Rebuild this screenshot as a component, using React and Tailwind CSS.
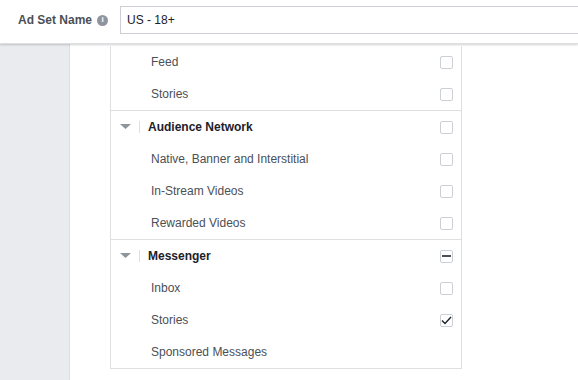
import React from "react";

const groups = [
  {
    title: null,
    items: [
      { label: "Feed", state: "off" },
      { label: "Stories", state: "off" },
    ],
  },
  {
    title: "Audience Network",
    state: "off",
    items: [
      { label: "Native, Banner and Interstitial", state: "off" },
      { label: "In-Stream Videos", state: "off" },
      { label: "Rewarded Videos", state: "off" },
    ],
  },
  {
    title: "Messenger",
    state: "mixed",
    items: [
      { label: "Inbox", state: "off" },
      { label: "Stories", state: "on" },
      { label: "Sponsored Messages", state: "none" },
    ],
  },
];

function Checkbox({ state }) {
  if (state === "none") return null;
  return (
    <div className="w-[13px] h-[13px] rounded-[2px] border border-[#ccd0d5] bg-white flex items-center justify-center">
      {state === "mixed" && <div className="w-[9px] h-[2px] bg-[#4b4f56]" />}
      {state === "on" && (
        <svg width="11" height="9" viewBox="0 0 11 9">
          <path d="M1 4.5 L4 7.5 L10 1" fill="none" stroke="#1d2129" strokeWidth="1.4" />
        </svg>
      )}
    </div>
  );
}

export default function App() {
  return (
    <div className="w-[578px] h-[380px] overflow-hidden bg-white text-[12px] font-['Liberation_Sans',Arial,sans-serif]">
      <div className="relative z-10 h-[44px] bg-white border-b border-[#dddfe2] shadow-[0_1px_2px_rgba(0,0,0,0.18)] flex items-center overflow-hidden">
        <div className="pl-[18px] w-[120px] shrink-0 flex items-center gap-[5px] -mt-[3px]">
          <span className="font-bold text-[#4b4f56]">Ad Set Name</span>
          <span className="w-[11px] h-[11px] rounded-full bg-[#90949c] text-white text-[8px] font-bold leading-none flex items-center justify-center">i</span>
        </div>
        <div className="shrink-0 w-[480px] h-[28px] -mt-[4px] border border-[#ccd0d5] flex items-center px-[6px] text-[#1d2129]">
          US - 18+
        </div>
      </div>
      <div className="flex h-[336px]">
        <div className="w-[70px] shrink-0 bg-[#e9ebee] border-r border-[#dddfe2]" />
        <div className="pl-[40px]">
          <div className="w-[352px] mt-[2px] border border-[#dddfe2] border-t-0 bg-white">
            {groups.map((g, gi) => (
              <div key={gi} className={gi > 0 ? "border-t border-[#dddfe2]" : ""}>
                {g.title && (
                  <div className="h-[32px] flex items-center pl-[9px] pr-[8px]">
                    <svg width="11" height="6" viewBox="0 0 11 6" className="mr-[8px]">
                      <path d="M0 0 H11 L5.5 5 Z" fill="#90949c" />
                    </svg>
                    <div className="w-px h-[12px] bg-[#dddfe2] mr-[8px]" />
                    <span className="flex-1 font-bold text-[#1d2129]">{g.title}</span>
                    <Checkbox state={g.state} />
                  </div>
                )}
                {g.items.map((it, ii) => (
                  <div key={ii} className="h-[32px] flex items-center pl-[40px] pr-[8px]">
                    <span className="flex-1 text-[#4b4f56]">{it.label}</span>
                    <Checkbox state={it.state} />
                  </div>
                ))}
              </div>
            ))}
          </div>
        </div>
      </div>
    </div>
  );
}
